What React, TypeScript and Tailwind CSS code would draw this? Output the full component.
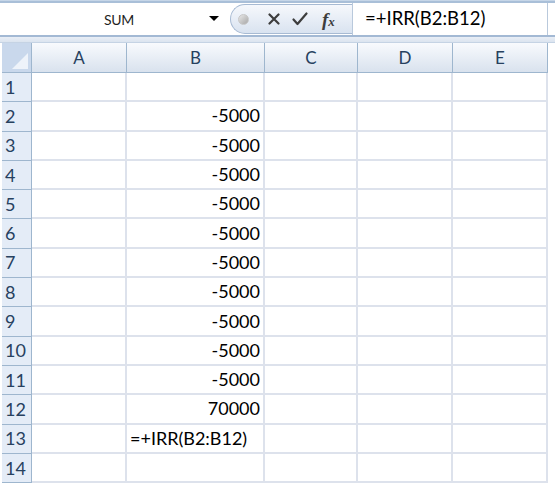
import React from 'react';

const COLS = [
    { key: 'A', width: 'w-[95px]' },
    { key: 'B', width: 'w-[138px]' },
    { key: 'C', width: 'w-[93px]' },
    { key: 'D', width: 'w-[95px]' },
    { key: 'E', width: 'w-[95px]' },
];

const ROWS: Record<number, string> = {
    2: '-5000', 3: '-5000', 4: '-5000', 5: '-5000', 6: '-5000',
    7: '-5000', 8: '-5000', 9: '-5000', 10: '-5000', 11: '-5000',
    12: '70000',
};

function FormulaBar() {
    return (
        <div className="flex flex-col">
            <div className="h-[3px] bg-[#a9bfd8] border-t border-[#c6d6e8]" />
            <div className="flex h-[32px] bg-white">
                <div className="relative w-[230px] flex items-center justify-center">
                    <span className="text-[14px] text-[#1f1f1f] pl-[8px] tracking-[-0.3px]">SUM</span>
                    <span className="absolute left-[209px] top-[13px] w-0 h-0 border-l-[5px] border-r-[5px] border-t-[5px] border-l-transparent border-r-transparent border-t-black" />
                </div>
                <div className="w-[122px] flex items-center rounded-l-full border border-r-0 border-[#a7bad3] bg-gradient-to-b from-[#f6f8fc] to-[#d9e3f0] my-[1px]">
                    <span className="ml-[7px] w-[11px] h-[11px] rounded-full bg-gradient-to-br from-[#e8e8e8] to-[#a8a8a8] border border-[#c7c7c7]" />
                    <svg className="ml-[19px]" width="12" height="12" viewBox="0 0 12 12">
                        <path d="M1.5 1.5 L10.5 10.5 M10.5 1.5 L1.5 10.5" stroke="#3d3d3d" strokeWidth="2.2" strokeLinecap="round" />
                    </svg>
                    <svg className="ml-[12px]" width="16" height="14" viewBox="0 0 16 14">
                        <path d="M1.5 7.5 L5.5 12 L14.5 1.5" stroke="#3d3d3d" strokeWidth="2.2" fill="none" strokeLinecap="round" strokeLinejoin="round" />
                    </svg>
                    <span className="ml-[14px] text-[19px] italic font-bold text-[#3d3d3d] font-['Liberation_Serif',serif] leading-none">
                        f<span className="text-[13px]">x</span>
                    </span>
                </div>
                <div className="flex-1 flex items-center border-l border-[#b9c9dc] pl-[12px] border-r mr-[7px]">
                    <span className="text-[18.5px] text-black">=+IRR(B2:B12)</span>
                </div>
            </div>
            <div className="h-[2px] bg-[#a3b9d4]" />
            <div className="h-[6px] bg-gradient-to-b from-[#e9eef6] to-[#dbe4ef] border-b border-[#c5d3e4]" />
        </div>
    );
}

export default function App() {
    const rowNums = Array.from({ length: 14 }, (_, i) => i + 1);
    return (
        <div className="w-[555px] h-[492px] overflow-hidden bg-white font-['Lato','Open_Sans',sans-serif]">
            <FormulaBar />
            <div className="flex flex-col pl-[2px]">
                {/* column headers */}
                <div className="flex h-[30px]">
                    <div className="relative w-[30px] bg-[#c9d8ec] border-r border-b border-[#9eb6ce]">
                        <span className="absolute right-[3px] bottom-[3px] w-0 h-0 border-b-[16px] border-l-[16px] border-b-[#eef3fa] border-l-transparent" />
                    </div>
                    {COLS.map((col) => (
                        <div
                            key={col.key}
                            className={`${col.width} flex items-center justify-center bg-gradient-to-b from-[#f8fafd] to-[#d9e2ee] border-r border-b border-[#9eb6ce] text-[17px] text-[#27415f]`}
                        >
                            {col.key}
                        </div>
                    ))}
                    <div className="flex-1 bg-white" />
                </div>
                {rowNums.map((n) => (
                    <div key={n} className="flex h-[29.3px]">
                        <div className="w-[30px] bg-[#e4ecf7] border-r border-b border-[#9eb6ce] flex items-center pl-[3px] text-[18px] text-[#27415f]">
                            {n}
                        </div>
                        {COLS.map((col) => (
                            <div
                                key={col.key}
                                className={`${col.width} border-r-2 border-b-2 border-[#dde2ec] flex items-center text-[18px] text-black ${n === 13 && col.key === 'B' ? 'justify-start pl-[3px]' : 'justify-end pr-[3px]'}`}
                            >
                                {col.key === 'B' ? (n === 13 ? '=+IRR(B2:B12)' : ROWS[n] ?? '') : ''}
                            </div>
                        ))}
                        <div className="flex-1 bg-white" />
                    </div>
                ))}
            </div>
        </div>
    );
}
